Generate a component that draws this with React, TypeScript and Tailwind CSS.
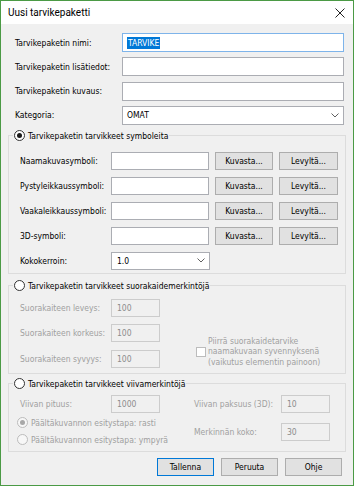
import React from "react";

const TextBox = ({
  width,
  value,
  disabled,
}: {
  width: string;
  value?: string;
  disabled?: boolean;
}) => (
  <div
    className={`${width} h-[18px] shrink-0 border flex items-center pl-[5px] ${
      disabled
        ? "border-[#cccccc] bg-[#f0f0f0] text-[#8c8c8c]"
        : "border-[#abadb3] bg-white text-black"
    }`}
  >
    {value}
  </div>
);

const Chevron = () => (
  <svg width="8" height="5" viewBox="0 0 8 5" className="shrink-0">
    <path d="M0.5 0.5 L4 4 L7.5 0.5" fill="none" stroke="#606060" strokeWidth="1" />
  </svg>
);

const Radio = ({ checked, disabled }: { checked?: boolean; disabled?: boolean }) => (
  <span
    className={`w-[11px] h-[11px] rounded-full border flex items-center justify-center shrink-0 ${
      disabled ? "border-[#bcbcbc] bg-[#f7f7f7]" : "border-[#333333] bg-white"
    }`}
  >
    {checked && (
      <span
        className={`w-[5px] h-[5px] rounded-full ${disabled ? "bg-[#a8a8a8]" : "bg-[#1a1a1a]"}`}
      />
    )}
  </span>
);

const Btn = ({
  children,
  width = "w-[58px]",
  isDefault,
}: {
  children: React.ReactNode;
  width?: string;
  isDefault?: boolean;
}) => (
  <div
    className={`${width} h-[18px] shrink-0 border flex items-center justify-center bg-[#e1e1e1] text-black ${
      isDefault ? "border-[#0078d7]" : "border-[#adadad]"
    }`}
  >
    {children}
  </div>
);

const symbolRows = ["Naamakuvasymboli:", "Pystyleikkaussymboli:", "Vaakaleikkaussymboli:", "3D-symboli:"];

export default function App() {
  return (
    <div className="w-[354px] h-[486px] border border-[#4b9a45] bg-[#f0f0f0] flex flex-col font-['DejaVu_Sans_Condensed',Roboto,sans-serif] text-[8.5px] leading-[12px] text-black overflow-hidden">
      {/* title bar */}
      <div className="h-[23px] bg-white flex items-center justify-between pl-[7px] pr-[8px] shrink-0">
        <span className="text-[10px] font-[Roboto,sans-serif] text-black">Uusi tarvikepaketti</span>
        <svg width="10" height="10" viewBox="0 0 10 10">
          <path d="M0.5 0.5 L9.5 9.5 M9.5 0.5 L0.5 9.5" stroke="#222" strokeWidth="1" />
        </svg>
      </div>

      <div className="flex flex-col pt-[9px]">
        {/* top fields */}
        <div className="flex flex-col gap-[5.3px] pl-[14px]">
          <div className="flex items-center h-[19px]">
            <span className="w-[107px]">Tarvikepaketin nimi:</span>
            <div className="w-[222px] h-[19px] border border-[#7eb4ea] bg-white flex items-center pl-[4px]">
              <span className="bg-[#0078d7] text-white px-[1px]">TARVIKE</span>
            </div>
          </div>
          <div className="flex items-center h-[19px]">
            <span className="w-[107px]">Tarvikepaketin lisätiedot:</span>
            <div className="w-[222px] h-[19px] border border-[#abadb3] bg-white" />
          </div>
          <div className="flex items-center h-[19px]">
            <span className="w-[107px]">Tarvikepaketin kuvaus:</span>
            <div className="w-[222px] h-[19px] border border-[#abadb3] bg-white" />
          </div>
          <div className="flex items-center h-[19px]">
            <span className="w-[107px]">Kategoria:</span>
            <div className="w-[222px] h-[19px] border border-[#abadb3] bg-white flex items-center justify-between pl-[4px] pr-[4px]">
              <span>OMAT</span>
              <Chevron />
            </div>
          </div>
        </div>

        {/* group 1 */}
        <fieldset className="mx-[7px] mt-[5px] border border-[#dcdcdc] pt-[10px] pb-[3px] pl-[11px]">
          <legend className="ml-[-7px] px-[1px]">
            <span className="flex items-center gap-[3px] h-[12px]">
              <Radio checked />
              <span>Tarvikepaketin tarvikkeet symboleita</span>
            </span>
          </legend>
          <div className="flex flex-col gap-[7px]">
            {symbolRows.map((l) => (
              <div key={l} className="flex items-center h-[18px]">
                <span className="w-[91px] whitespace-nowrap">{l}</span>
                <TextBox width="w-[98px]" />
                <div className="ml-[6px]">
                  <Btn>Kuvasta...</Btn>
                </div>
                <div className="ml-[6px]">
                  <Btn width="w-[59px]">Levyltä...</Btn>
                </div>
              </div>
            ))}
            <div className="flex items-center h-[18px]">
              <span className="w-[91px]">Kokokerroin:</span>
              <div className="w-[99px] h-[18px] border border-[#abadb3] bg-white flex items-center justify-between pl-[5px] pr-[4px]">
                <span>1.0</span>
                <Chevron />
              </div>
            </div>
          </div>
        </fieldset>

        {/* group 2 */}
        <fieldset className="mx-[7px] mt-[6px] border border-[#dcdcdc] pt-[7px] pb-[5px] pl-[11px]">
          <legend className="ml-[-7px] px-[1px]">
            <span className="flex items-center gap-[3px] h-[12px]">
              <Radio />
              <span>Tarvikepaketin tarvikkeet suorakaidemerkintöjä</span>
            </span>
          </legend>
          <div className="flex items-start">
            <div className="flex flex-col gap-[7.5px] text-[#a0a0a0]">
              {[
                ["Suorakaiteen leveys:", "100"],
                ["Suorakaiteen korkeus:", "100"],
                ["Suorakaiteen syvyys:", "100"],
              ].map(([l, v]) => (
                <div key={l} className="flex items-center h-[18px]">
                  <span className="w-[91px] whitespace-nowrap">{l}</span>
                  <TextBox width="w-[49px]" value={v} disabled />
                </div>
              ))}
            </div>
            <div className="mt-[37px] ml-[36px] flex items-center gap-[2px] text-[#a0a0a0] leading-[10.5px]">
              <span className="w-[10px] h-[10px] border border-[#bcbcbc] bg-white shrink-0" />
              <span className="leading-[10.5px] whitespace-nowrap">
                Piirrä suorakaidetarvike
                <br />
                naamakuvaan syvennyksenä
                <br />
                (vaikutus elementin painoon)
              </span>
            </div>
          </div>
        </fieldset>

        {/* group 3 */}
        <fieldset className="mx-[7px] mt-[4px] border border-[#dcdcdc] pt-[5px] pb-[5px]">
          <legend className="ml-[4px] px-[1px]">
            <span className="flex items-center gap-[3px] h-[12px]">
              <Radio />
              <span>Tarvikepaketin tarvikkeet viivamerkintöjä</span>
            </span>
          </legend>
          <div className="flex text-[#a0a0a0]">
            <div className="w-[151px] flex flex-col">
              <div className="flex items-center h-[18px] pl-[11px]">
                <span className="w-[91px]">Viivan pituus:</span>
                <TextBox width="w-[49px]" value="1000" disabled />
              </div>
              <div className="flex flex-col gap-[5px] mt-[4px] pl-[8px]">
                <div className="flex items-center gap-[3px] h-[12px] whitespace-nowrap">
                  <Radio checked disabled />
                  <span>Päältäkuvannon esitystapa: rasti</span>
                </div>
                <div className="flex items-center gap-[3px] h-[12px] whitespace-nowrap">
                  <Radio disabled />
                  <span>Päältäkuvannon esitystapa: ympyrä</span>
                </div>
              </div>
            </div>
            <div className="ml-[34px] flex flex-col gap-[10px]">
              <div className="flex items-center h-[18px]">
                <span className="w-[87px] whitespace-nowrap">Viivan paksuus (3D):</span>
                <TextBox width="w-[49px]" value="10" disabled />
              </div>
              <div className="flex items-center h-[18px]">
                <span className="w-[87px] whitespace-nowrap">Merkinnän koko:</span>
                <TextBox width="w-[49px]" value="30" disabled />
              </div>
            </div>
          </div>
        </fieldset>

        {/* buttons */}
        <div className="flex justify-end gap-[7px] mt-[6px] pr-[11px]">
          <Btn width="w-[57px]" isDefault>
            Tallenna
          </Btn>
          <Btn width="w-[57px]">Peruuta</Btn>
          <Btn width="w-[57px]">Ohje</Btn>
        </div>
      </div>
    </div>
  );
}
